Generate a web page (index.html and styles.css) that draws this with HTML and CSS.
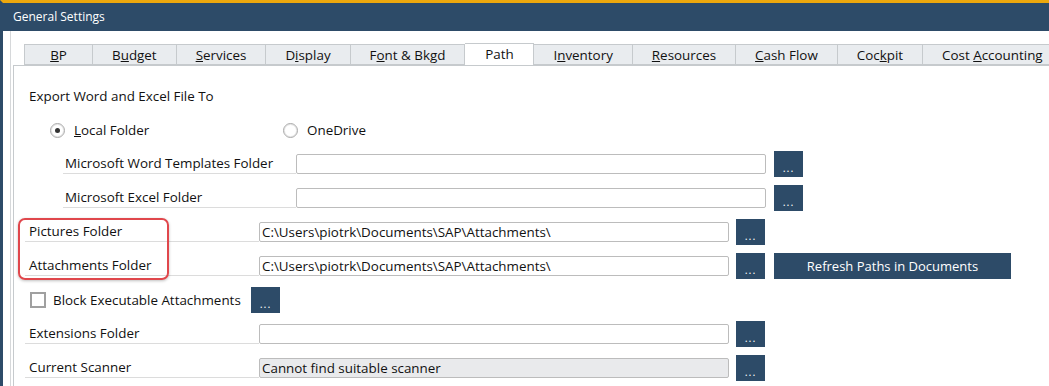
FILE: index.html
```html
<!DOCTYPE html>
<html lang="en">

<head>
    <meta charset="UTF-8">
    <meta name="viewport" content="width=device-width, initial-scale=1.0">
    <title>General Settings</title>
    <link rel="stylesheet" href="styles.css">
</head>

<body>
    <div class="window">
        <div class="titlebar">General Settings</div>
        <div class="frame">
            <div class="tabs">
                <div class="tab"><u>B</u>P</div>
                <div class="tab">B<u>u</u>dget</div>
                <div class="tab"><u>S</u>ervices</div>
                <div class="tab">D<u>i</u>splay</div>
                <div class="tab">F<u>o</u>nt &amp; Bkgd</div>
                <div class="tab active">Path</div>
                <div class="tab">I<u>n</u>ventory</div>
                <div class="tab"><u>R</u>esources</div>
                <div class="tab"><u>C</u>ash Flow</div>
                <div class="tab">Coc<u>k</u>pit</div>
                <div class="tab">Cost <u>A</u>ccounting</div>
            </div>

            <div class="panel">
                <div class="row">
                    <span class="heading">Export Word and Excel File To</span>
                </div>
                <div class="row radios">
                    <label class="radio checked"><span class="dot"></span><u>L</u>ocal Folder</label>
                    <label class="radio"><span class="dot"></span>OneDrive</label>
                </div>
                <div class="row indent">
                    <span class="field-label">Microsoft Word Templates Folder</span>
                    <div class="input"></div>
                    <button class="browse">...</button>
                </div>
                <div class="row indent">
                    <span class="field-label">Microsoft Excel Folder</span>
                    <div class="input"></div>
                    <button class="browse">...</button>
                </div>
                <div class="row">
                    <span class="field-label">Pictures Folder</span>
                    <div class="input">C:\Users\piotrk\Documents\SAP\Attachments\</div>
                    <button class="browse">...</button>
                </div>
                <div class="row">
                    <span class="field-label">Attachments Folder</span>
                    <div class="input">C:\Users\piotrk\Documents\SAP\Attachments\</div>
                    <button class="browse">...</button>
                    <button class="refresh">Refresh Paths in Documents</button>
                </div>
                <div class="row">
                    <label class="checkbox"><span class="box"></span>Block Executable Attachments</label>
                    <button class="browse">...</button>
                </div>
                <div class="row">
                    <span class="field-label">Extensions Folder</span>
                    <div class="input"></div>
                    <button class="browse">...</button>
                </div>
                <div class="row">
                    <span class="field-label">Current Scanner</span>
                    <div class="input disabled">Cannot find suitable scanner</div>
                    <button class="browse">...</button>
                </div>

                <!-- annotation around the two folder labels -->
                <div class="highlight"></div>
            </div>
        </div>
    </div>
</body>

</html>
```

FILE: styles.css
```css
body {
    margin: 0;
    font-family: "Open Sans", "Noto Sans", sans-serif;
    font-size: 13.4px;
    color: #111;
    background-color: #fff;
    overflow: hidden;
}

.window {
    height: 386px;
    border-top: 3px solid #eda80d;
    border-left: 3px solid #2d4b68;
    box-sizing: border-box;
    overflow: hidden;
}

.titlebar {
    height: 28px;
    margin-left: -3px;
    padding-left: 13px;
    line-height: 27px;
    font-size: 12px;
    color: #fff;
    background-color: #2d4b68;
}

.frame {
    height: 100%;
    margin-left: 7px;
    padding-left: 1px;
    border-left: 1px solid #d6d8da;
}

.tabs {
    display: flex;
    align-items: flex-end;
    height: 34px;
    padding-left: 12px;
    white-space: nowrap;
}

.tab {
    height: 21px;
    min-width: 69px;
    padding: 0 19px;
    box-sizing: border-box;
    line-height: 20px;
    text-align: center;
    background-color: #e9ecef;
    border: 1px solid #c6cacd;
    border-left: none;
    flex-shrink: 0;
}

.tab:first-child {
    border-left: 1px solid #c6cacd;
}

.tab.active {
    height: 23px;
    margin-bottom: -1px;
    background-color: #fff;
    border-bottom: none;
}

.panel {
    position: relative;
    height: 100%;
    padding: 13px 0 0 11px;
    border-left: 1px solid #c6cacd;
    border-top: 1px solid #c6cacd;
    margin-left: 1px;
}

.row {
    display: flex;
    align-items: center;
    height: 34px;
}

.heading {
    padding-left: 4px;
}

.radios {
    padding-left: 25px;
}

.radio {
    display: flex;
    align-items: center;
}

.radio.checked {
    width: 233px;
}

.dot {
    width: 13px;
    height: 13px;
    margin-right: 9px;
    border: 1px solid #a9a9a9;
    border-radius: 50%;
    box-shadow: inset 0 0 0 1px #e6e6e6;
    position: relative;
}

.radio.checked .dot::after {
    content: "";
    position: absolute;
    top: 4px;
    left: 4px;
    width: 5px;
    height: 5px;
    border-radius: 50%;
    background-color: #333;
}

.indent {
    padding-left: 38px;
}

.field-label {
    width: 234px;
    height: 20px;
    padding-left: 4px;
    box-sizing: border-box;
    line-height: 18px;
    border-bottom: 1px solid #dcdcdc;
    white-space: nowrap;
}

.indent .field-label {
    width: 233px;
    padding-left: 2px;
}

.input {
    width: 470px;
    height: 20px;
    padding-left: 2px;
    box-sizing: border-box;
    line-height: 18px;
    border: 1px solid #bcbcbc;
    border-radius: 2px;
    white-space: nowrap;
    overflow: hidden;
}

.input.disabled {
    background-color: #e9eaec;
}

button {
    font-family: inherit;
    color: #fff;
    background-color: #2d4b68;
    border: none;
    border-radius: 0;
    padding: 0;
    cursor: pointer;
}

.browse {
    width: 29px;
    height: 26px;
    margin-left: 7px;
    padding-top: 6px;
    font-size: 11px;
    letter-spacing: 1px;
}

.indent .browse {
    margin-left: 8px;
}

.refresh {
    width: 237px;
    height: 26px;
    margin-left: 9px;
    font-size: 13px;
}

.checkbox {
    display: flex;
    align-items: center;
    width: 219px;
    padding-left: 5px;
    box-sizing: border-box;
    white-space: nowrap;
}

.box {
    width: 12px;
    height: 12px;
    margin-right: 7px;
    border: 2px solid #a0a0a0;
}

.highlight {
    position: absolute;
    left: 4px;
    top: 152px;
    width: 147px;
    height: 58px;
    border: 2px solid #e0474c;
    border-radius: 7px;
    box-shadow: 0 1px 3px rgba(0, 0, 0, 0.25);
}
```
